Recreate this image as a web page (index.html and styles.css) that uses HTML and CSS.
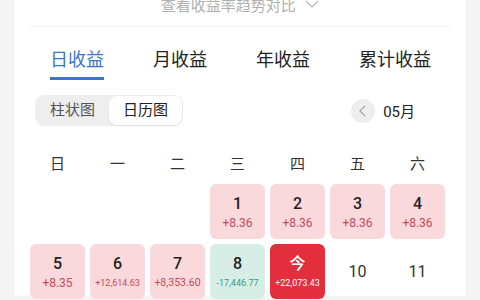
FILE: index.html
```html
<!DOCTYPE html>
<html lang="zh-CN">
<head>
    <meta charset="UTF-8">
    <meta name="viewport" content="width=device-width, initial-scale=1.0">
    <title>收益日历</title>
    <link rel="stylesheet" href="styles.css">
</head>
<body>

    <div class="card">
        <div class="trend">
            查看收益率趋势对比
            <svg class="trend-arrow" width="14" height="8" viewBox="0 0 14 8"><polyline points="1,1 7,7 13,1" fill="none" stroke="#b5b5b5" stroke-width="1.2"/></svg>
        </div>

        <div class="tabs">
            <span class="tab active">日收益</span>
            <span class="tab">月收益</span>
            <span class="tab">年收益</span>
            <span class="tab">累计收益</span>
        </div>

        <div class="toolbar">
            <div class="segment">
                <span class="seg-item">柱状图</span>
                <span class="seg-item selected">日历图</span>
            </div>
            <div class="month-nav">
                <span class="prev-btn">
                    <svg width="10" height="14" viewBox="0 0 10 14"><polyline points="7,2 2,7 7,12" fill="none" stroke="#a8a8a8" stroke-width="1.3"/></svg>
                </span>
                <span class="month">05月</span>
            </div>
        </div>

        <div class="weekdays">
            <span>日</span><span>一</span><span>二</span><span>三</span><span>四</span><span>五</span><span>六</span>
        </div>

        <div class="calendar">
            <div class="day blank"></div>
            <div class="day blank"></div>
            <div class="day blank"></div>
            <div class="day up"><span class="num">1</span><span class="val">+8.36</span></div>
            <div class="day up"><span class="num">2</span><span class="val">+8.36</span></div>
            <div class="day up"><span class="num">3</span><span class="val">+8.36</span></div>
            <div class="day up"><span class="num">4</span><span class="val">+8.36</span></div>

            <div class="day up"><span class="num">5</span><span class="val">+8.35</span></div>
            <div class="day up"><span class="num">6</span><span class="val small">+12,614.63</span></div>
            <div class="day up"><span class="num">7</span><span class="val mid">+8,353.60</span></div>
            <div class="day down"><span class="num">8</span><span class="val small">-17,446.77</span></div>
            <div class="day today"><span class="num">今</span><span class="val small">+22,073.43</span></div>
            <div class="day empty"><span class="num">10</span></div>
            <div class="day empty"><span class="num">11</span></div>
        </div>
    </div>

</body>
</html>
```

FILE: styles.css
```css
body {
    font-family: Roboto, "Noto Sans CJK SC", sans-serif;
    background-color: #f4f4f4;
    margin: 0;
    padding: 0;
    height: 300px;
    overflow: hidden;
}
.card {
    background-color: white;
    margin: 0 15px;
    padding: 0 15px;
    height: 300px;
}
.trend {
    margin-top: -4px;
    padding-bottom: 10px;
    border-bottom: 1px solid #f2f2f2;
    text-align: center;
    color: #b0b0b0;
    font-size: 15px;
    line-height: 20px;
}
.trend-arrow {
    margin-left: 6px;
    vertical-align: 3px;
}
.tabs {
    display: flex;
    gap: 49px;
    padding: 20px 0 0 20px;
}
.tab {
    font-size: 18px;
    line-height: 26px;
    color: #222;
    padding-bottom: 4px;
    border-bottom: 3px solid transparent;
}
.tab.active {
    color: #3a77cc;
    border-bottom-color: #3a77cc;
}
.toolbar {
    display: flex;
    justify-content: space-between;
    align-items: center;
    margin-top: 15px;
    padding: 0 35px 0 5px;
}
.segment {
    display: flex;
    background-color: #eeeeee;
    border-radius: 9px;
    padding: 1px;
}
.seg-item {
    font-size: 15px;
    line-height: 29px;
    padding: 0 14px;
    color: #555;
    border-radius: 8px;
}
.seg-item.selected {
    background-color: white;
    color: #222;
    box-shadow: 0 1px 2px rgba(0, 0, 0, 0.08);
}
.month-nav {
    display: flex;
    align-items: center;
    gap: 8px;
}
.prev-btn {
    width: 24px;
    height: 24px;
    border-radius: 50%;
    background-color: #eeeeee;
    display: flex;
    justify-content: center;
    align-items: center;
}
.month {
    font-size: 15px;
    color: #222;
}
.weekdays {
    display: grid;
    grid-template-columns: repeat(7, 55px);
    column-gap: 5px;
    margin-top: 28px;
    font-size: 15px;
    line-height: 20px;
    color: #333;
    text-align: center;
}
.calendar {
    display: grid;
    grid-template-columns: repeat(7, 55px);
    grid-auto-rows: 55px;
    gap: 5px;
    margin-top: 10px;
}
.day {
    border-radius: 6px;
    display: flex;
    flex-direction: column;
    align-items: center;
    padding-top: 10px;
    box-sizing: border-box;
}
.day .num {
    font-size: 16px;
    font-weight: 500;
    line-height: 20px;
    color: #222;
}
.day .val {
    margin-top: 1px;
    font-size: 12px;
    line-height: 16px;
    color: #c44a59;
}
.day .val.small {
    font-size: 9px;
}
.day .val.mid {
    font-size: 10.5px;
}
.day.up {
    background-color: #fad9dc;
}
.day.down {
    background-color: #d7eee7;
}
.day.down .val {
    color: #3a9a7a;
}
.day.today {
    background-color: #e22e3d;
}
.day.today .num,
.day.today .val {
    color: white;
}
.day.empty {
    justify-content: center;
    padding-top: 0;
}
.day.empty .num {
    font-weight: 400;
    color: #333;
}
```
